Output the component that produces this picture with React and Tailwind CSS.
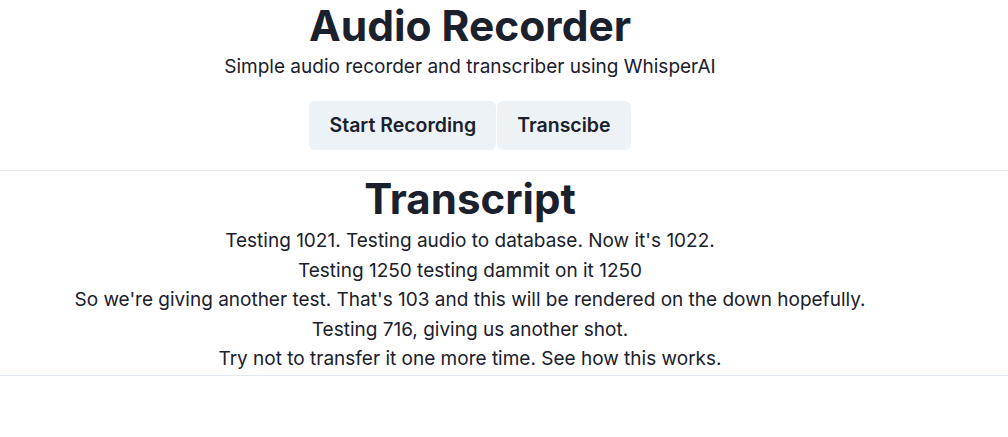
import React from 'react'

const lines = [
  "Testing 1021. Testing audio to database. Now it's 1022.",
  'Testing 1250 testing dammit on it 1250',
  "So we're giving another test. That's 103 and this will be rendered on the down hopefully.",
  'Testing 716, giving us another shot.',
  'Try not to transfer it one more time. See how this works.',
]

const App = () => {
  return (
    <div className="min-h-screen bg-white text-[#1a202c] font-['Inter',sans-serif]">
      <div className="w-[940px] flex flex-col items-center">
        <h1 className="text-[42.5px] leading-[52px] font-bold">Audio Recorder</h1>
        <p className="text-[19px] leading-[30px]">Simple audio recorder and transcriber using WhisperAI</p>
        <div className="flex gap-px mt-[19px]">
          <button className="h-[49px] px-5 rounded-md bg-[#edf2f7] text-[19.5px] font-semibold">Start Recording</button>
          <button className="h-[49px] px-5 rounded-md bg-[#edf2f7] text-[19.5px] font-semibold">Transcibe</button>
        </div>
      </div>
      <hr className="mt-5 border-[#e2e8f0]" />
      <div className="w-[940px] flex flex-col items-center pb-px">
        <h2 className="text-[42px] leading-[55px] font-bold">Transcript</h2>
        {lines.map((l, i) => (
          <p key={i} className="text-[19px] leading-[29.5px]">{l}</p>
        ))}
      </div>
      <hr className="border-[#e2e8f0]" />
    </div>
  )
}

export default App
